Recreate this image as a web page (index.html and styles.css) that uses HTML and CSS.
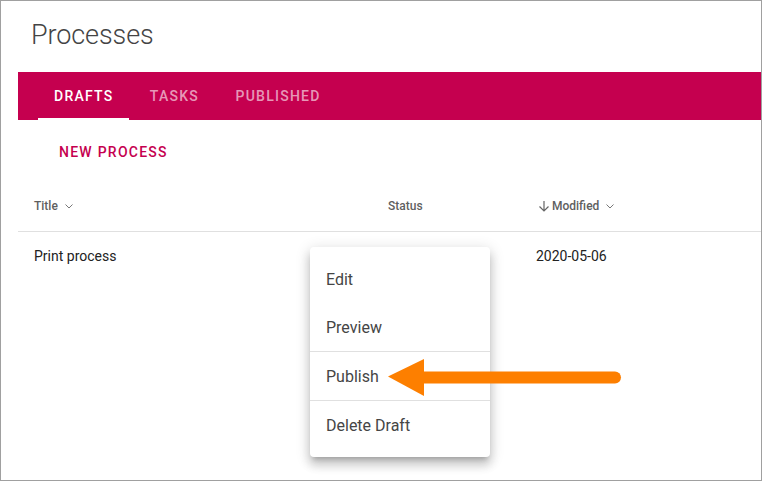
FILE: index.html
```html
<!DOCTYPE html>
<html>
<head>
<meta charset="utf-8">
<link rel="stylesheet" href="styles.css">
</head>
<body>
<div class="frame">
  <h1 class="page-title">Processes</h1>
  <nav class="tabs">
    <div class="tab active">DRAFTS</div>
    <div class="tab">TASKS</div>
    <div class="tab">PUBLISHED</div>
  </nav>
  <div class="actions">
    <button class="text-btn">NEW PROCESS</button>
  </div>
  <div class="table">
    <div class="row head">
      <div class="cell c-title">Title <svg class="chev" width="10" height="6" viewBox="0 0 10 6"><path d="M1.5 1.5l3.5 3.5 3.5-3.5" fill="none" stroke="#777" stroke-width="1"/></svg></div>
      <div class="cell c-status">Status</div>
      <div class="cell c-mod"><svg class="sort" width="12" height="12" viewBox="0 0 12 12"><path d="M6 1v10M1.5 6.5L6 11l4.5-4.5" fill="none" stroke="#666" stroke-width="1.2"/></svg>Modified <svg class="chev" width="10" height="6" viewBox="0 0 10 6"><path d="M1.5 1.5l3.5 3.5 3.5-3.5" fill="none" stroke="#777" stroke-width="1"/></svg></div>
    </div>
    <div class="row data">
      <div class="cell c-title">Print process</div>
      <div class="cell c-status"></div>
      <div class="cell c-mod">2020-05-06</div>
    </div>
  </div>
  <div class="menu">
    <div class="item">Edit</div>
    <div class="item">Preview</div>
    <div class="sep"></div>
    <div class="item">Publish</div>
    <div class="sep"></div>
    <div class="item">Delete Draft</div>
  </div>
  <svg class="arrow" width="240" height="40" viewBox="0 0 240 40">
    <path d="M34 18.5H227" stroke="#fd7f00" stroke-width="12" stroke-linecap="round"/>
    <polygon points="0,17.5 36,0 36,37" fill="#fd7f00"/>
  </svg>
</div>
</body>
</html>
```

FILE: styles.css
```css
* { box-sizing: border-box; }
html, body { margin: 0; padding: 0; background: #fff; }
body { font-family: Roboto, "Noto Sans", sans-serif; }
.frame {
  position: relative;
  width: 762px;
  height: 481px;
  border: 1px solid #a0a0a0;
  padding: 0 0 0 17px;
  overflow: hidden;
}
.page-title {
  margin: 18px 0 0 13px;
  font-weight: 300;
  font-size: 27px;
  line-height: 32px;
  color: #444;
  letter-spacing: -0.1px;
}
.tabs {
  margin-top: 21px;
  height: 48px;
  background: #c5004f;
  display: flex;
  padding-left: 20px;
}
.tab {
  min-width: 90px;
  padding: 0 16px;
  display: flex;
  align-items: center;
  justify-content: center;
  font-size: 14px;
  font-weight: 500;
  letter-spacing: 1.25px;
  color: rgba(255,255,255,0.6);
  position: relative;
}
.tab.active { color: #fff; }
.tab.active::after {
  content: "";
  position: absolute;
  left: 0; right: 0; bottom: 0;
  height: 2px;
  background: #fff;
}
.actions { margin-top: 14px; padding-left: 25px; }
.text-btn {
  height: 36px;
  padding: 0 16px;
  border: 0;
  background: transparent;
  font-family: Roboto, sans-serif;
  font-size: 14px;
  font-weight: 500;
  letter-spacing: 1.25px;
  color: #c5004f;
}
.table { margin-top: 5px; }
.row { display: flex; align-items: center; }
.row.head {
  height: 57px;
  padding-top: 5px;
  border-bottom: 1px solid #e0e0e0;
  font-size: 12px;
  font-weight: 500;
  color: #5f5f5f;
}
.row.data {
  height: 47px;
  font-size: 14px;
  color: #222;
}
.c-title { width: 370px; padding-left: 16px; display: flex; align-items: center; }
.c-status { width: 148px; }
.c-mod { display: flex; align-items: center; }
.chev { margin-left: 6px; }
.sort { margin-right: 2px; margin-left: 2px; }
.menu {
  position: absolute;
  left: 309px;
  top: 246px;
  width: 180px;
  padding: 8px 0;
  background: #fff;
  border-radius: 4px;
  box-shadow: 0 5px 5px -3px rgba(0,0,0,0.2), 0 8px 10px 1px rgba(0,0,0,0.14), 0 3px 14px 2px rgba(0,0,0,0.12);
}
.item {
  height: 48px;
  padding-left: 16px;
  display: flex;
  align-items: center;
  font-size: 16px;
  color: #454545;
}
.sep { height: 1px; background: #e0e0e0; }
.arrow {
  position: absolute;
  left: 387px;
  top: 358px;
}
```
